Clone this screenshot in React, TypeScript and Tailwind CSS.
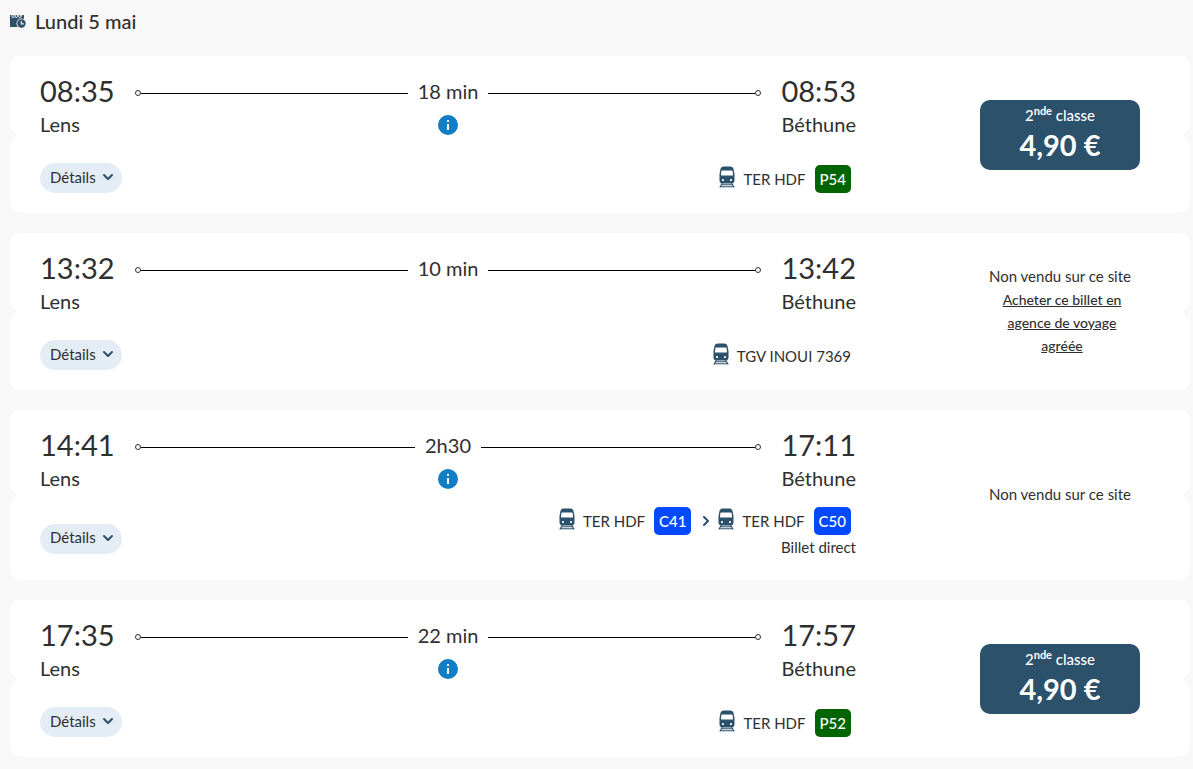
import React, { Fragment } from 'react';
import { ChevronDown, ChevronRight } from 'lucide-react';

type Leg = {
  name: string;
  line?: string;
  color?: 'green' | 'blue';
};

type Journey = {
  id: number;
  departure: string;
  arrival: string;
  duration: string;
  info: boolean;
  legs: Leg[];
  note?: string;
  price?: string;
  agency?: boolean;
};

const journeys: Journey[] = [
  {
    id: 1,
    departure: '08:35',
    arrival: '08:53',
    duration: '18 min',
    info: true,
    legs: [{ name: 'TER HDF', line: 'P54', color: 'green' }],
    price: '4,90 €',
  },
  {
    id: 2,
    departure: '13:32',
    arrival: '13:42',
    duration: '10 min',
    info: false,
    legs: [{ name: 'TGV INOUI 7369' }],
    agency: true,
  },
  {
    id: 3,
    departure: '14:41',
    arrival: '17:11',
    duration: '2h30',
    info: true,
    legs: [
      { name: 'TER HDF', line: 'C41', color: 'blue' },
      { name: 'TER HDF', line: 'C50', color: 'blue' },
    ],
    note: 'Billet direct',
  },
  {
    id: 4,
    departure: '17:35',
    arrival: '17:57',
    duration: '22 min',
    info: true,
    legs: [{ name: 'TER HDF', line: 'P52', color: 'green' }],
    price: '4,90 €',
  },
];

const CalendarIcon = () => (
  <svg viewBox="0 0 16 14" className="h-[14px] w-4" aria-hidden="true">
    <path d="M0 1h14v12H0z" fill="#2c516b" />
    <path d="M2 0v2.600a1 1 0 0 0 2 0V0M5.300 0v2.600a1 1 0 0 0 2 0V0M8.600 0v2.600a1 1 0 0 0 2 0V0M11.600 0v2.600" fill="none" stroke="#f8f8f8" strokeWidth=".9" />
    <circle cx="11.500" cy="9.500" r="5" fill="#f8f8f8" />
    <circle cx="11.500" cy="9.500" r="4.200" fill="#2c516b" />
    <path d="M11.300 7v2.900h2.500" fill="none" stroke="#f8f8f8" strokeWidth="1.100" />
  </svg>
);

const TrainIcon = () => (
  <svg viewBox="0 0 16 22" className="h-[22px] w-4 shrink-0" aria-hidden="true">
    <path
      fillRule="evenodd"
      d="M5 .5h6c2.200 0 3.200.8 3.600 3L15.500 8v6.500c0 1.800-1.300 3-3.200 3H3.700c-1.900 0-3.200-1.200-3.200-3V8l.9-4.500C1.800 1.300 2.800.5 5 .5zM3.300 4.400C2.700 4.400 2.400 4.800 2.300 5.400L2 8.700c0 .6.200.9.800.9h10.400c.6 0 .8-.3.8-.9l-.3-3.300c-.1-.6-.4-1-1-1zM4 13a1.100 1.100 0 1 0 0 2.200A1.100 1.100 0 0 0 4 13zm8 0a1.100 1.100 0 1 0 0 2.200 1.100 1.100 0 0 0 0-2.200z"
      fill="#2c516b"
    />
    <path d="M3.400 17 .8 21.500M12.600 17l2.600 4.500M2.600 18.800h10.800M1 20.800h14" fill="none" stroke="#2c516b" strokeWidth="1.100" />
  </svg>
);

const InfoIcon = () => (
  <svg viewBox="0 0 20 20" className="h-5 w-5" aria-hidden="true">
    <circle cx="10" cy="10" r="10" fill="#117dc4" />
    <path d="M9 5h2v2H9zM9 9h2v6H9z" fill="#fff" />
  </svg>
);

const Timeline = ({ duration }: { duration: string }) => (
  <div className="flex h-10 items-center">
    <span className="h-[6px] w-[6px] rounded-full border border-[#2f2f2f]" />
    <span className="h-px flex-1 bg-black" />
    <span className="px-[10px] pb-1 text-xl">{duration}</span>
    <span className="h-px flex-1 bg-black" />
    <span className="h-[6px] w-[6px] rounded-full border border-[#2f2f2f]" />
  </div>
);

const LegItem = ({ leg }: { leg: Leg }) => (
  <span className="flex h-7 items-center">
    <span className="mb-1">
      <TrainIcon />
    </span>
    <span className="ml-2 text-[15px]">{leg.name}</span>
    {leg.line && (
      <span
        className={`ml-[9px] rounded-[5px] px-[5px] text-[15px] font-medium leading-7 text-white ${
          leg.color === 'green' ? 'bg-[#006400]' : 'bg-[#0549ff]'
        }`}
      >
        {leg.line}
      </span>
    )}
  </span>
);

const Offer = ({ journey }: { journey: Journey }) => {
  if (journey.price) {
    return (
      <button className="h-[70px] w-full rounded-[10px] bg-[#2c516b] pb-1 text-white">
        <span className="block text-[15px] font-medium leading-6">
          2<sup className="text-[11px] font-bold">nde</sup> classe
        </span>
        <span className="block text-[29px] font-bold leading-9">{journey.price}</span>
      </button>
    );
  }
  return (
    <div className="pb-[2px] text-center text-[15px] leading-[23px]">
      <p>Non vendu sur ce site</p>
      {journey.agency && (
        <p className="pl-4 pr-3 text-sm leading-[23px]">
          <a href="#agence" className="font-medium underline">
            Acheter ce billet en agence de voyage agréée
          </a>
        </p>
      )}
    </div>
  );
};

const JourneyCard = ({ journey }: { journey: Journey }) => (
  <li className="relative flex items-center overflow-hidden rounded-[10px] bg-white pl-[30px] pr-[50px]">
    <span className="absolute -left-[6px] top-1/2 h-3 w-3 -translate-y-1/2 rounded-full bg-[#f8f8f8]" />
    <span className="absolute -right-[6px] top-1/2 h-3 w-3 -translate-y-1/2 rounded-full bg-[#f8f8f8]" />

    <div className="min-w-0 flex-1 pb-5 pt-[17px]">
      <div className="flex h-20">
        <div className="w-[95px]">
          <p className="text-[29px] leading-9">{journey.departure}</p>
          <p className="text-xl leading-[30px]">Lens</p>
        </div>
        <div className="flex-1">
          <Timeline duration={journey.duration} />
          {journey.info && (
            <button aria-label="Informations" className="mx-auto mt-[2px] block">
              <InfoIcon />
            </button>
          )}
        </div>
        <div className="w-[95px] text-right">
          <p className="text-[29px] leading-9">{journey.arrival}</p>
          <p className="text-xl leading-[30px]">Béthune</p>
        </div>
      </div>

      <div className="flex min-h-10 justify-between">
        <div className="flex items-center pt-[10px]">
          <button className="flex h-[30px] items-center gap-1 rounded-full bg-[#e4edf5] pb-[2px] pl-[10px] pr-[6px] text-[15px]">
            Détails
            <ChevronDown className="h-4 w-4 text-[#2c516b]" strokeWidth={3} />
          </button>
        </div>
        <div className="flex flex-col items-end justify-end">
          <div className="flex items-center pr-[5px]">
            {journey.legs.map((leg, i) => (
              <Fragment key={leg.line ?? leg.name}>
                {i > 0 && <ChevronRight className="ml-[7px] mr-1 h-4 w-4 text-[#2c516b]" strokeWidth={3} />}
                <LegItem leg={leg} />
              </Fragment>
            ))}
          </div>
          {journey.note && <p className="text-[15px] leading-[25px]">{journey.note}</p>}
        </div>
      </div>
    </div>

    <div className="ml-[124px] w-40 shrink-0">
      <Offer journey={journey} />
    </div>
  </li>
);

const App = () => {
  return (
    <main className="min-h-screen bg-[#f8f8f8] pb-3 pl-[10px] pr-[3px] font-['Lato','Open_Sans',sans-serif] text-[#2f2f2f]">
      <div className="flex items-center gap-[9px] pb-5 pt-[6px]">
        <CalendarIcon />
        <h1 className="text-xl font-medium leading-[30px]">Lundi 5 mai</h1>
      </div>
      <ul className="flex flex-col gap-5">
        {journeys.map((journey) => (
          <JourneyCard key={journey.id} journey={journey} />
        ))}
      </ul>
    </main>
  );
};

export default App;
